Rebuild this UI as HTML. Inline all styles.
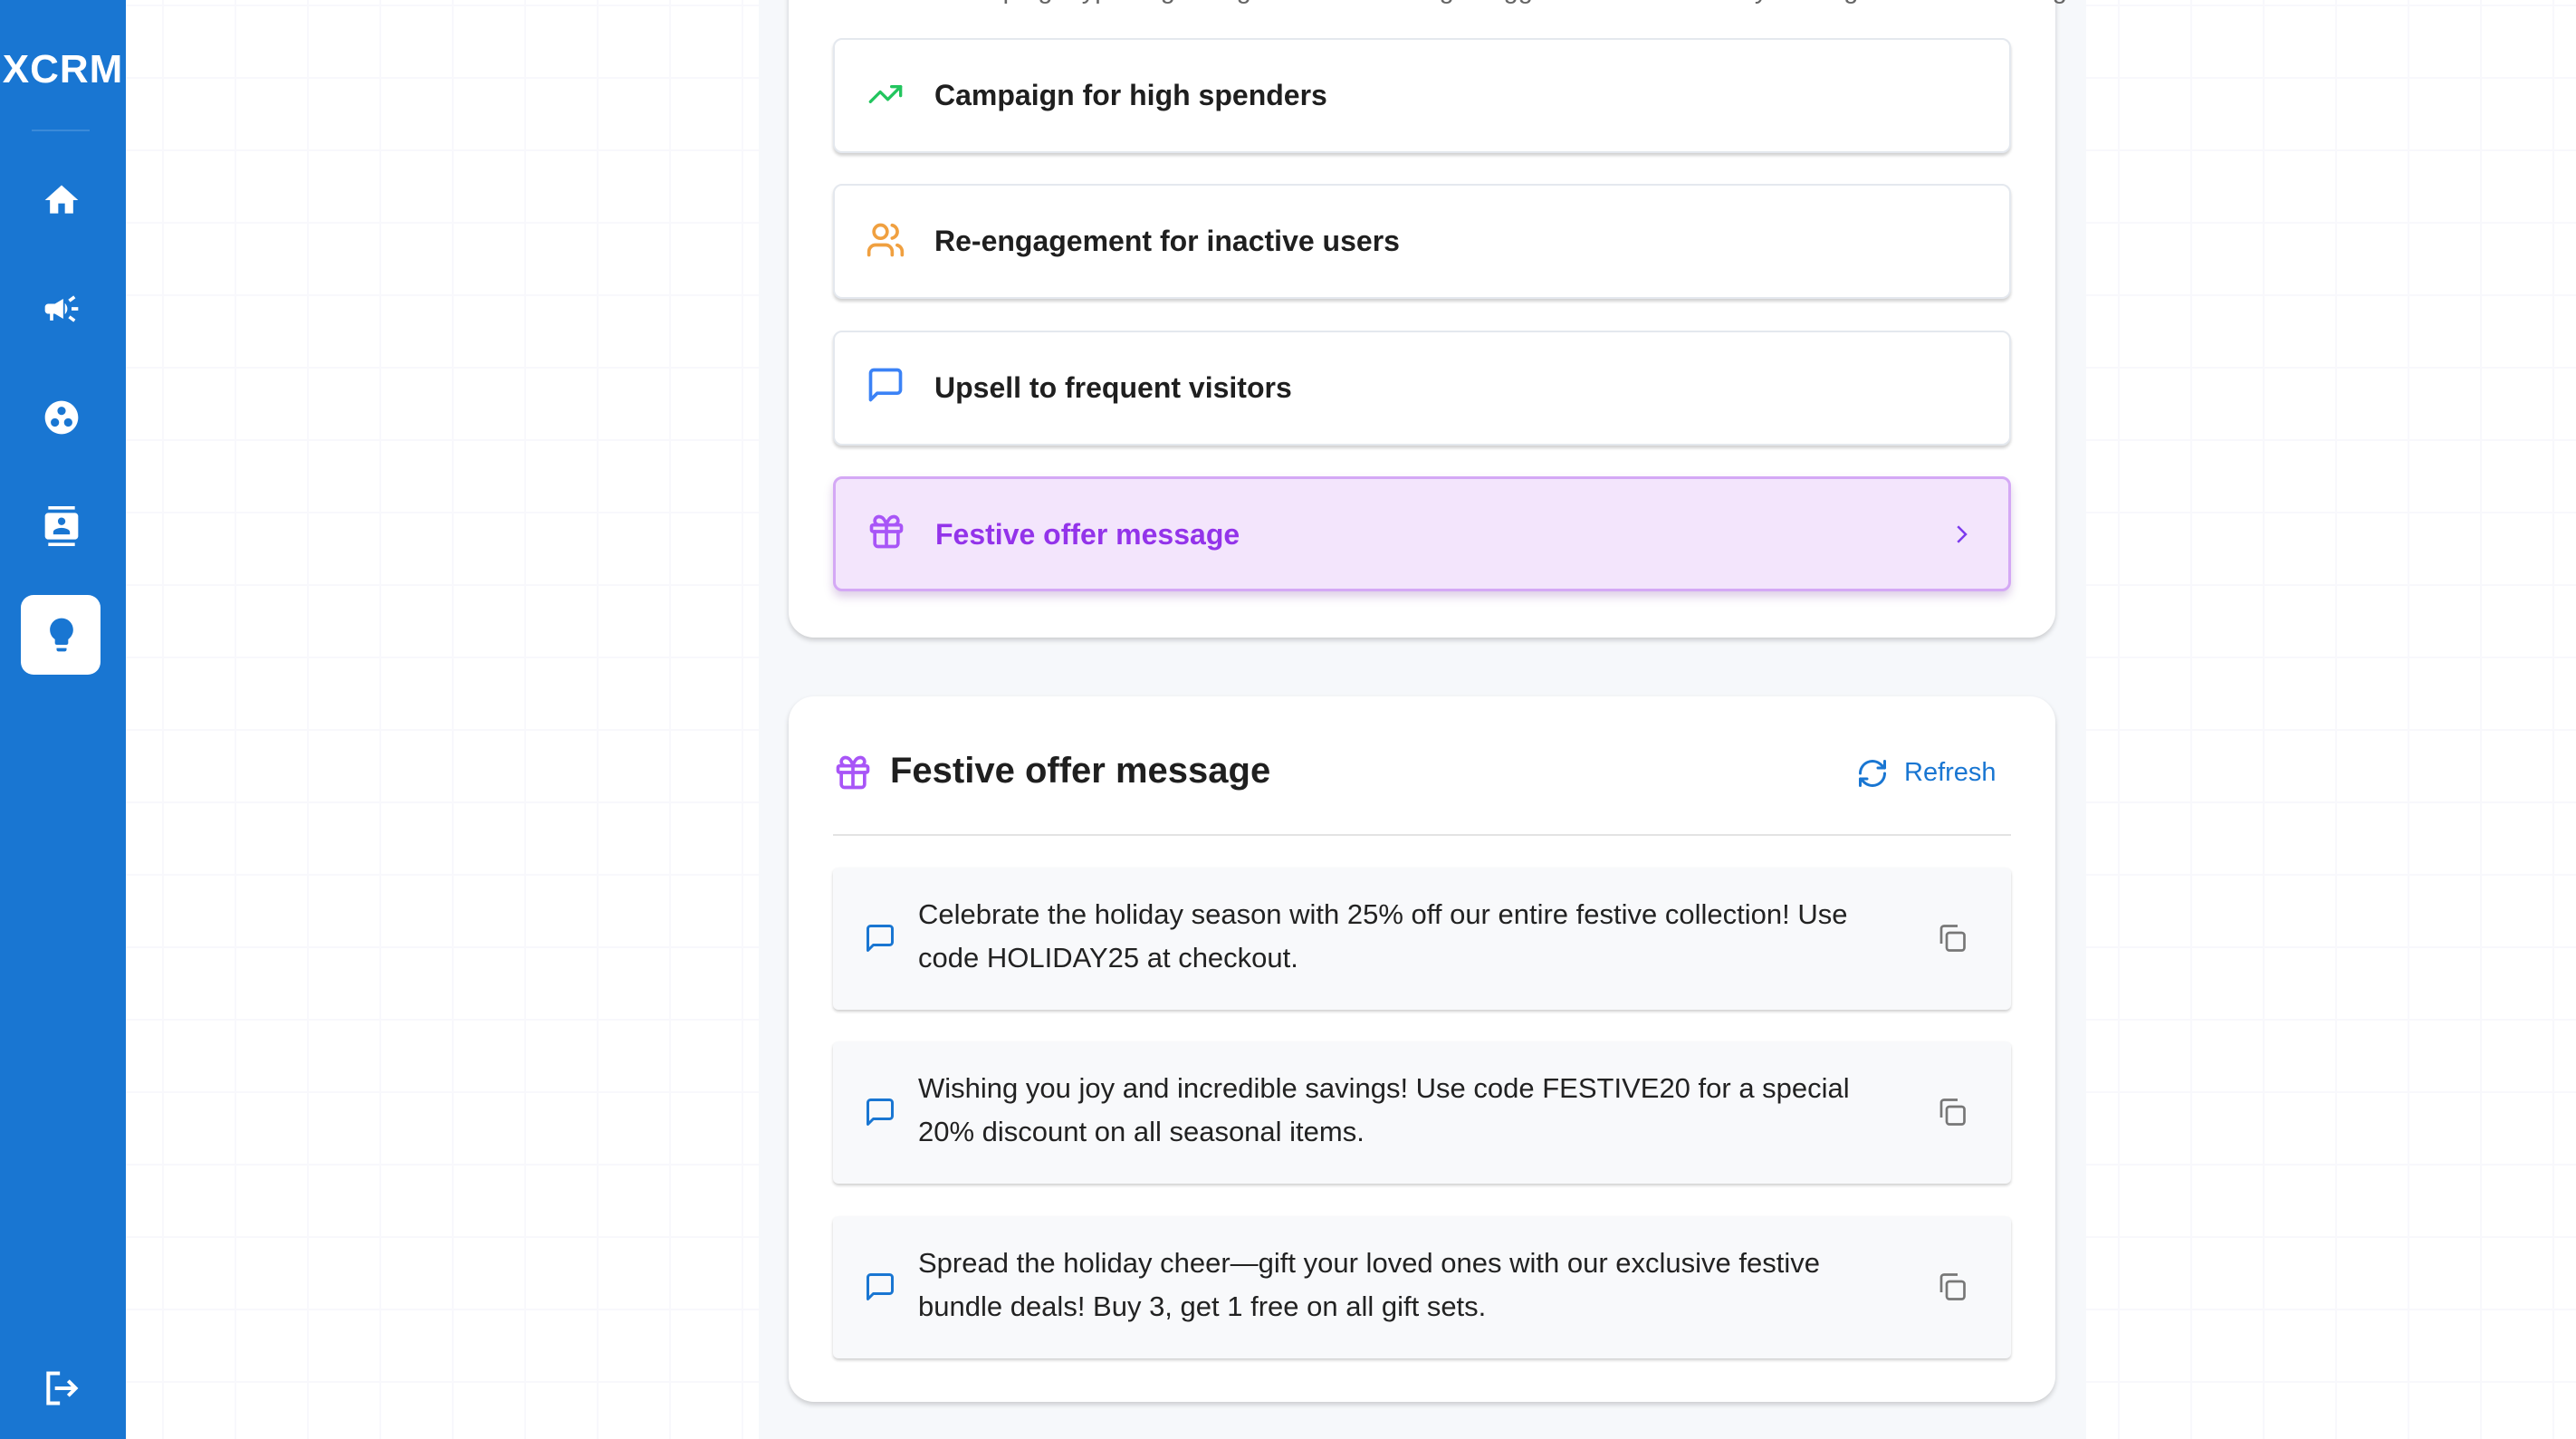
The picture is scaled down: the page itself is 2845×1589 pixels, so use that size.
<!DOCTYPE html>
<html><head><meta charset="utf-8">
<style>
*{box-sizing:border-box;margin:0;padding:0}
html,body{width:2845px;height:1589px;overflow:hidden}
body{font-family:"Liberation Sans",sans-serif;position:relative;background-color:#fff;
background-image:linear-gradient(#f8f8fc 2px,transparent 2px),linear-gradient(90deg,#f8f8fc 2px,transparent 2px);
background-size:80px 80px;background-position:0 5px,19px 0}
.side{position:absolute;left:0;top:0;width:139px;height:1589px;background:#1976d2}
.logo{position:absolute;left:0;top:52px;width:139px;text-align:center;color:#fff;font-weight:bold;font-size:44px;letter-spacing:1px}
.div{position:absolute;left:35px;top:143px;width:64px;height:2px;background:#3b8ad9}
.ic{position:absolute;left:46px;width:44px;height:44px}
.active{position:absolute;left:23px;top:657px;width:88px;height:88px;background:#fff;border-radius:14px}
.col{position:absolute;left:838px;top:0;width:1466px;height:1589px;background:#f6f8fb}
.card{position:absolute;left:871px;width:1399px;background:#fff;border-radius:28px;box-shadow:0 3px 6px rgba(0,0,0,.18)}
.item{position:absolute;left:920px;width:1301px;height:127px;background:#fff;border:2px solid #e4e8ee;border-radius:10px;box-shadow:0 3px 3px rgba(0,0,0,.18)}
.item .t{position:absolute;left:110px;top:0;line-height:123px;font-size:32px;font-weight:bold;color:#1f1f1f}
.item svg{position:absolute;left:34px;top:40px}
.msg{position:absolute;left:920px;width:1301px;height:157px;background:#f8f9fb;border-radius:6px;box-shadow:0 2px 3px rgba(0,0,0,.2)}
.msg .t{position:absolute;left:94px;top:28px;width:1085px;font-size:31px;line-height:48px;color:#222}
.msg .b{position:absolute;left:34px;top:60px}
.msg .c{position:absolute;left:1218px;top:60px}
</style></head><body>
<div class="side">
 <div class="logo">XCRM</div>
 <div class="div"></div>
 <svg class="ic" style="top:199px" viewBox="0 0 24 24"><path fill="#fff" d="M10 20v-6h4v6h5v-8h3L12 3 2 12h3v8z"/></svg>
 <svg class="ic" style="top:319px" viewBox="0 0 24 24"><path fill="#fff" d="M18 11v2h4v-2h-4zm-2 6.6c1 .7 2.2 1.6 3.2 2.4.4-.5.8-1.1 1.2-1.6-1-.8-2.3-1.700-3.2-2.4-.4.5-.8 1.1-1.2 1.6zM20.4 5.6c-.4-.5-.8-1.1-1.2-1.6-1 .8-2.2 1.7-3.2 2.4.4.5.8 1.1 1.2 1.6 1-.7 2.2-1.6 3.2-2.4zM4 9c-1.1 0-2 .9-2 2v2c0 1.1.9 2 2 2h1v4h2v-4h1l5 3V6L8 9H4zm11.5 3c0-1.3-.6-2.5-1.5-3.4v6.7c.9-.8 1.5-2 1.5-3.3z"/></svg>
 <svg class="ic" style="top:439px" viewBox="0 0 24 24"><path fill="#fff" d="M12 2C6.5 2 2 6.5 2 12s4.5 10 10 10 10-4.5 10-10S17.5 2 12 2zM8 17.5c-1.4 0-2.5-1.1-2.5-2.5s1.1-2.5 2.5-2.5 2.5 1.1 2.5 2.5-1.1 2.5-2.5 2.5zM9.5 8c0-1.4 1.1-2.5 2.5-2.5s2.5 1.1 2.5 2.5-1.1 2.5-2.5 2.5S9.5 9.4 9.5 8zm6.5 9.5c-1.4 0-2.5-1.1-2.5-2.5s1.1-2.5 2.5-2.5 2.5 1.1 2.5 2.5-1.1 2.5-2.5 2.5z"/></svg>
 <svg class="ic" style="top:559px" viewBox="0 0 24 24"><path fill="#fff" d="M20 0H4v2h16V0zM4 24h16v-2H4v2zM20 4H4c-1.1 0-2 .9-2 2v12c0 1.1.9 2 2 2h16c1.1 0 2-.9 2-2V6c0-1.1-.9-2-2-2zm-8 2.8c1.2 0 2.3 1 2.3 2.3S13.2 11.4 12 11.4 9.8 10.3 9.8 9s1-2.2 2.2-2.2zM17 17H7v-1.5c0-1.7 3.3-2.5 5-2.5s5 .8 5 2.5V17z"/></svg>
 <div class="active"></div>
 <svg class="ic" style="top:679px" viewBox="0 0 24 24"><path fill="#1976d2" d="M9 21c0 .5.4 1 1 1h4c.6 0 1-.5 1-1v-1H9v1zm3-19C8.1 2 5 5.1 5 9c0 2.4 1.2 4.5 3 5.7V17c0 .5.4 1 1 1h6c.6 0 1-.5 1-1v-2.3c1.8-1.3 3-3.4 3-5.7 0-3.9-3.1-7-7-7z"/></svg>
 <svg class="ic" style="top:1511px" viewBox="0 0 24 24"><path fill="none" stroke="#fff" stroke-width="2.2" d="M11 3H4v18h7M8 12h12M16 7.5l4.5 4.5-4.5 4.5"/></svg>
</div>
<div class="col"></div>
<div class="card" style="top:-40px;height:744px"></div>
<div style="position:absolute;left:940px;top:-27px;font-size:29px;color:#666;white-space:nowrap">Select a campaign type to get AI-generated message suggestions tailored for your target audience and goals</div>

<div class="item" style="top:42px"><svg width="44" height="40" viewBox="0 0 24 24" fill="none" stroke="#22c55e" stroke-width="2" stroke-linecap="round" stroke-linejoin="round"><path d="M22 7l-8.5 8.5-5-5L2 17"/><path d="M16 7h6v6"/></svg><div class="t">Campaign for high spenders</div></div>
<div class="item" style="top:203px"><svg width="44" height="44" viewBox="0 0 24 24" fill="none" stroke="#f0a040" stroke-width="2" stroke-linecap="round" stroke-linejoin="round" style="top:38px"><path d="M16 21v-2a4 4 0 0 0-4-4H6a4 4 0 0 0-4 4v2"/><circle cx="9" cy="7" r="4"/><path d="M22 21v-2a4 4 0 0 0-3-3.9M16 3.1a4 4 0 0 1 0 7.8"/></svg><div class="t">Re-engagement for inactive users</div></div>
<div class="item" style="top:365px"><svg width="44" height="44" viewBox="0 0 24 24" fill="none" stroke="#3b82f6" stroke-width="2" stroke-linejoin="round" style="top:36px"><path d="M21 15a2 2 0 0 1-2 2H7l-4 4V5a2 2 0 0 1 2-2h14a2 2 0 0 1 2 2z"/></svg><div class="t">Upsell to frequent visitors</div></div>
<div class="item" style="top:526px;background:#f3e5fc;border:3px solid #d4a8f5;box-shadow:0 6px 10px rgba(120,60,160,.25)"><svg width="44" height="44" viewBox="0 0 24 24" fill="none" stroke="#a855f7" stroke-width="2" stroke-linecap="round" stroke-linejoin="round" style="top:36px"><rect x="3" y="8" width="18" height="4" rx="1"/><path d="M12 8v13M19 12v7a2 2 0 0 1-2 2H7a2 2 0 0 1-2-2v-7"/><path d="M7.5 8a2.5 2.5 0 0 1 0-5C11 3 12 8 12 8s1-5 4.5-5a2.5 2.5 0 0 1 0 5"/></svg><div class="t" style="color:#9333ea">Festive offer message</div>
<svg width="30" height="30" viewBox="0 0 24 24" fill="none" stroke="#7c3aed" stroke-width="2" style="left:1228px;top:46px"><path d="M9 5l7 7-7 7"/></svg></div>

<div class="card" style="top:769px;height:779px"></div>
<svg style="position:absolute;left:920px;top:831px" width="44" height="44" viewBox="0 0 24 24" fill="none" stroke="#a855f7" stroke-width="2" stroke-linecap="round" stroke-linejoin="round"><rect x="3" y="8" width="18" height="4" rx="1"/><path d="M12 8v13M19 12v7a2 2 0 0 1-2 2H7a2 2 0 0 1-2-2v-7"/><path d="M7.5 8a2.5 2.5 0 0 1 0-5C11 3 12 8 12 8s1-5 4.5-5a2.5 2.5 0 0 1 0 5"/></svg>
<div style="position:absolute;left:983px;top:829px;font-size:40px;font-weight:bold;color:#1f1f1f">Festive offer message</div>
<svg style="position:absolute;left:2050px;top:836px" width="36" height="36" viewBox="0 0 24 24" fill="none" stroke="#1976d2" stroke-width="2" stroke-linecap="round" stroke-linejoin="round"><path d="M3 12a9 9 0 0 1 15-6.7L21 8M21 3v5h-5M21 12a9 9 0 0 1-15 6.7L3 16M8 16H3v5"/></svg>
<div style="position:absolute;left:2103px;top:837px;font-size:29px;color:#1976d2">Refresh</div>
<div style="position:absolute;left:920px;top:921px;width:1301px;height:2px;background:#e3e3e3"></div>

<div class="msg" style="top:958px"><svg class="b" width="36" height="36" viewBox="0 0 24 24" fill="none" stroke="#1976d2" stroke-width="2" stroke-linejoin="round"><path d="M21 15a2 2 0 0 1-2 2H7l-4 4V5a2 2 0 0 1 2-2h14a2 2 0 0 1 2 2z"/></svg><div class="t">Celebrate the holiday season with 25% off our entire festive collection! Use code HOLIDAY25 at checkout.</div><svg class="c" width="36" height="36" viewBox="0 0 24 24" fill="none" stroke="#777" stroke-width="1.8"><rect x="8" y="8" width="13" height="13" rx="2"/><path d="M4 16V5a2 2 0 0 1 2-2h10"/></svg></div>
<div class="msg" style="top:1150px"><svg class="b" width="36" height="36" viewBox="0 0 24 24" fill="none" stroke="#1976d2" stroke-width="2" stroke-linejoin="round"><path d="M21 15a2 2 0 0 1-2 2H7l-4 4V5a2 2 0 0 1 2-2h14a2 2 0 0 1 2 2z"/></svg><div class="t">Wishing you joy and incredible savings! Use code FESTIVE20 for a special 20% discount on all seasonal items.</div><svg class="c" width="36" height="36" viewBox="0 0 24 24" fill="none" stroke="#777" stroke-width="1.8"><rect x="8" y="8" width="13" height="13" rx="2"/><path d="M4 16V5a2 2 0 0 1 2-2h10"/></svg></div>
<div class="msg" style="top:1343px"><svg class="b" width="36" height="36" viewBox="0 0 24 24" fill="none" stroke="#1976d2" stroke-width="2" stroke-linejoin="round"><path d="M21 15a2 2 0 0 1-2 2H7l-4 4V5a2 2 0 0 1 2-2h14a2 2 0 0 1 2 2z"/></svg><div class="t">Spread the holiday cheer—gift your loved ones with our exclusive festive bundle deals! Buy 3, get 1 free on all gift sets.</div><svg class="c" width="36" height="36" viewBox="0 0 24 24" fill="none" stroke="#777" stroke-width="1.8"><rect x="8" y="8" width="13" height="13" rx="2"/><path d="M4 16V5a2 2 0 0 1 2-2h10"/></svg></div>
</body></html>
